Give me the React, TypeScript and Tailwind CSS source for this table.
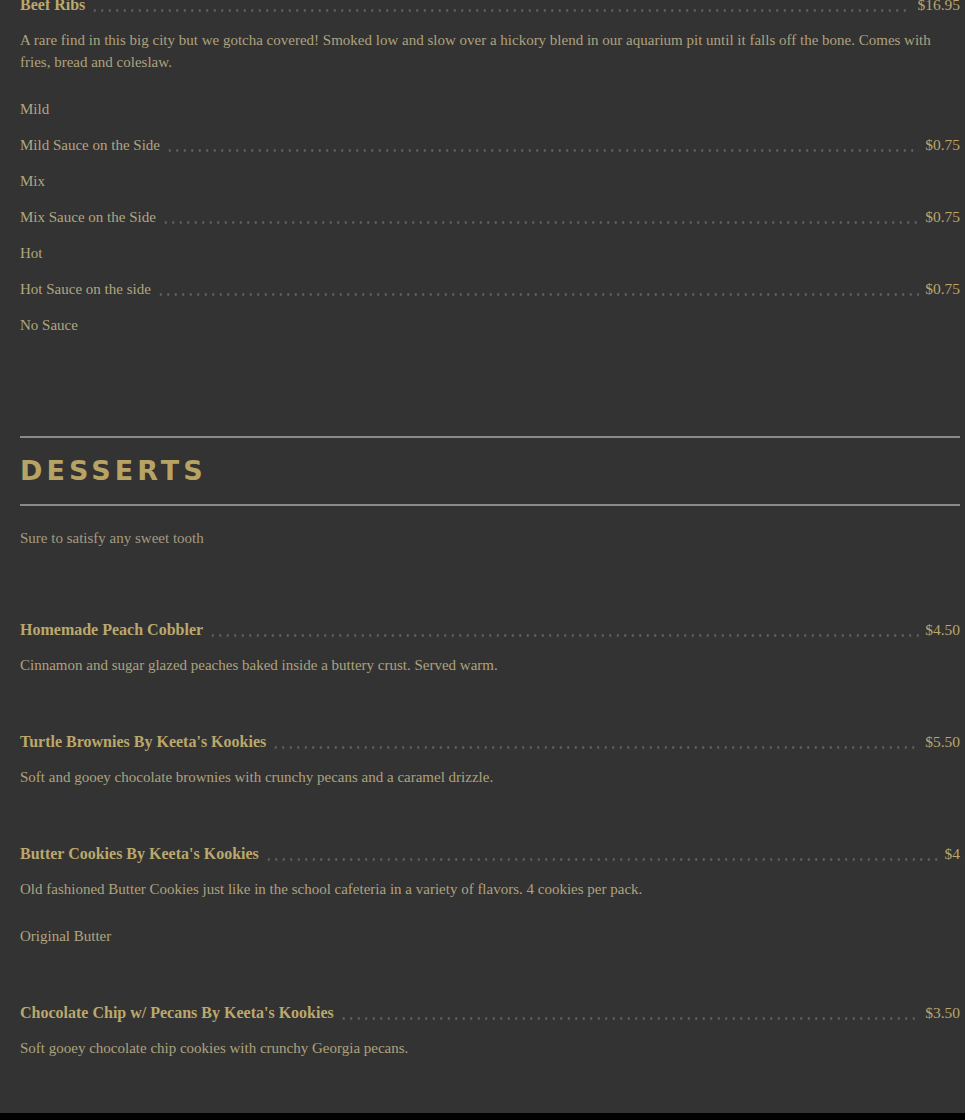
import React from 'react';

interface MenuItem {
  name: string;
  price: string;
  description: string;
  options?: { label: string; price?: string }[];
}

const desserts: MenuItem[] = [
  {
    name: 'Homemade Peach Cobbler',
    price: '$4.50',
    description: 'Cinnamon and sugar glazed peaches baked inside a buttery crust. Served warm.',
  },
  {
    name: "Turtle Brownies By Keeta's Kookies",
    price: '$5.50',
    description: 'Soft and gooey chocolate brownies with crunchy pecans and a caramel drizzle.',
  },
  {
    name: "Butter Cookies By Keeta's Kookies",
    price: '$4',
    description:
      'Old fashioned Butter Cookies just like in the school cafeteria in a variety of flavors. 4 cookies per pack.',
    options: [{ label: 'Original Butter' }],
  },
  {
    name: "Chocolate Chip w/ Pecans By Keeta's Kookies",
    price: '$3.50',
    description: 'Soft gooey chocolate chip cookies with crunchy Georgia pecans.',
  },
];

const sauces = [
  { label: 'Mild' },
  { label: 'Mild Sauce on the Side', price: '$0.75' },
  { label: 'Mix' },
  { label: 'Mix Sauce on the Side', price: '$0.75' },
  { label: 'Hot' },
  { label: 'Hot Sauce on the side', price: '$0.75' },
  { label: 'No Sauce' },
];

// dotted leader between a name and its price
const Leader = () => (
  <span className="flex-1 mx-[6px] h-[3px] translate-y-[2px] bg-[radial-gradient(circle,#646464_1px,transparent_1.4px)] bg-[length:7.5px_3px] bg-repeat-x" />
);

const Row: React.FC<{ name: string; price?: string; title?: boolean }> = ({ name, price, title }) => (
  <div className="flex items-baseline">
    <span
      className={
        title
          ? 'text-[16px] font-bold text-[#bba86c] leading-[20px]'
          : 'text-[15px] text-[#b1a67f] leading-[20px]'
      }
    >
      {name}
    </span>
    {price && (
      <>
        <Leader />
        <span className="text-[15.5px] text-[#b8a66c] leading-[20px]">{price}</span>
      </>
    )}
  </div>
);

const App: React.FC = () => {
  return (
    <div className="min-h-screen bg-[#333333] font-['Liberation_Serif','Times_New_Roman',serif] overflow-hidden">
      <div className="pl-[20px] pr-[5px]">
        {/* Beef Ribs, tail of the previous section */}
        <div className="mt-[-5px]">
          <Row name="Beef Ribs" price="$16.95" title />
          <p className="mt-[14px] text-[15px] leading-[22px] text-[#aea27e] pr-[20px]">
            A rare find in this big city but we gotcha covered! Smoked low and slow over a hickory blend in our
            aquarium pit until it falls off the bone. Comes with fries, bread and coleslaw.
          </p>
          <div className="mt-[26px] flex flex-col gap-[16px]">
            {sauces.map((s) => (
              <Row key={s.label} name={s.label} price={s.price} />
            ))}
          </div>
        </div>

        {/* Desserts */}
        <div className="mt-[101px] border-t-2 border-b-2 border-[#8a8a8a] py-[13px]">
          <h2 className="font-['DejaVu_Sans',Verdana,sans-serif] font-bold text-[27px] leading-[40px] tracking-[0.15em] text-[#b7a465]">
            DESSERTS
          </h2>
        </div>
        <p className="mt-[22px] text-[15px] leading-[20px] text-[#a49b82]">Sure to satisfy any sweet tooth</p>

        <div className="mt-[72px] flex flex-col gap-[57px]">
          {desserts.map((d) => (
            <div key={d.name}>
              <Row name={d.name} price={d.price} title />
              <p className="mt-[15px] text-[15px] leading-[20px] text-[#aea27e]">{d.description}</p>
              {d.options && (
                <div className="mt-[27px]">
                  {d.options.map((o) => (
                    <Row key={o.label} name={o.label} price={o.price} />
                  ))}
                </div>
              )}
            </div>
          ))}
        </div>
      </div>
      <div className="mt-[55px] h-[40px] bg-black" />
    </div>
  );
};

export default App;
